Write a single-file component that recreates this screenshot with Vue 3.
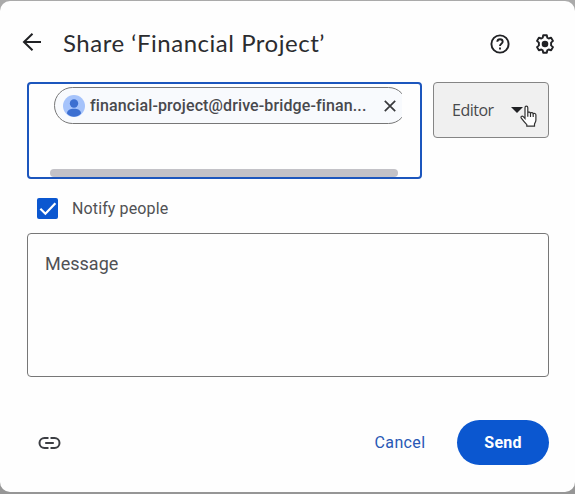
<script setup>
import { ref } from 'vue'

const email = 'financial-project@drive-bridge-finan...'
const message = ref('')
const notify = ref(true)
</script>

<template>
  <main class="page">
    <section class="dialog">
      <header class="header">
        <svg class="back" viewBox="0 0 20 20"><path d="M19 10H2M10.500 1.800 2 10l8.500 8.200" /></svg>
        <h1 class="title">Share ‘Financial Project’</h1>
        <svg class="help" viewBox="0 0 20 20">
          <circle cx="10" cy="10" r="8.600" />
          <path d="M7.300 7.800C7.400 6.100 8.500 5.300 10 5.300s2.700 1 2.700 2.500c0 1.900-2.700 2.100-2.700 4.200" />
          <path d="M10 13.600v1.800" />
        </svg>
        <svg class="gear" viewBox="0 0 20 20">
          <path d="M8.200 1.200h3.600l.5 2.500 1.400.8 2.400-.8 1.900 3.200-1.900 1.700v2.800l1.900 1.700-1.900 3.200-2.400-.8-1.400.8-.5 2.500H8.200l-.5-2.500-1.400-.8-2.400.8L2 13.100l1.900-1.700V8.600L2 6.900l1.900-3.200 2.400.8 1.400-.8z" />
          <circle cx="10" cy="10" r="3.300" />
        </svg>
      </header>

      <div class="invite">
        <div class="people">
          <div class="viewport">
            <div class="chip">
              <svg class="avatar" viewBox="0 0 22 22">
                <circle cx="11" cy="11" r="11" fill="#a5c3fb" />
                <circle cx="11" cy="8.500" r="4.200" fill="#3c6fd1" />
                <path d="M4 18.500c0-3.400 3.500-4.800 7-4.800s7 1.400 7 4.800c-4 4.400-10 4.400-14 0z" fill="#3c6fd1" />
              </svg>
              <span class="email">{{ email }}</span>
              <svg class="remove" viewBox="0 0 12 12"><path d="M.8.8l10.400 10.400M11.200.8.8 11.200" /></svg>
            </div>
          </div>
          <div class="scrollbar"></div>
        </div>
        <div class="role">
          <span class="role-name">Editor</span>
          <svg class="caret" viewBox="0 0 12 6"><path d="M0 0h12L6 6z" /></svg>
          <svg class="pointer" viewBox="0 0 18 23">
            <path d="M5 13.500V2.700c0-2.200 2.800-2.200 2.800 0v5.100c.5-1.200 2.500-1 2.700.5.500-1.100 2.500-.8 2.700.6.800-1 2.700-.5 2.700 1.100v5c0 2-1.100 2.900-1.400 4.200v2H6.800v-1.600C5 17.800 3.200 15.700 1.500 13.400.2 11.600 2 10.300 3.300 11.600z" />
            <path d="M7.800 7.500v4.200M10.500 8.500v3.400M13.200 9.300V12" />
          </svg>
        </div>
      </div>

      <label class="notify">
        <input v-model="notify" class="native" type="checkbox" />
        <span class="box">
          <svg v-if="notify" viewBox="0 0 20 20"><path d="M3.200 10.300 8 15 17.500 5" /></svg>
        </span>
        <span class="notify-text">Notify people</span>
      </label>

      <textarea v-model="message" class="message" placeholder="Message"></textarea>

      <footer class="footer">
        <svg class="link" viewBox="0 0 22 12">
          <path d="M10 1H6a5 5 0 0 0 0 10h4M12 1h4a5 5 0 0 1 0 10h-4M6.700 6h8.600" />
        </svg>
        <button class="cancel">Cancel</button>
        <button class="send">Send</button>
      </footer>
    </section>
  </main>
</template>

<style>
body { background: #a3a3a3; }
</style>

<style scoped>
* { box-sizing: border-box; }
.page { height: 494px; padding: 1px 0 2px; overflow: hidden; background: linear-gradient(#aaa, #969696); font-family: Roboto, "Liberation Sans", sans-serif; }
.dialog { height: 491px; padding: 0 26px 0 27px; border-radius: 10px; background: #fefefe; display: flex; flex-direction: column; }
svg { display: block; flex: none; }
.header { height: 81px; display: flex; align-items: center; padding: 5px 0 0; margin-left: -5px; margin-right: -6px; }
.back { width: 20px; height: 20px; margin-top: -5px; fill: none; stroke: #202124; stroke-width: 2; }
.title { margin: -3px auto 0 21px; font: 400 24px/30px Lato, sans-serif; letter-spacing: .52px; color: #2b2c2f; white-space: nowrap; }
.help, .gear { width: 20px; height: 20px; margin-top: -1px; fill: none; stroke: #202124; stroke-width: 1.900; }
.gear { margin-left: 25px; stroke-linejoin: round; }
.gear circle { fill: #202124; stroke: none; }
.invite { display: flex; gap: 11px; align-items: flex-start; }
.people { width: 395px; height: 97px; border: 2px solid #1c56bd; border-radius: 4px; padding: 3px 0 0 21px; display: flex; flex-direction: column; justify-content: space-between; }
.viewport { width: 348px; margin-left: 4px; overflow: hidden; }
.chip { width: 353px; height: 37px; border: 1px solid #777; border-radius: 19px; background: #f8fafd; display: flex; align-items: center; padding-left: 8px; }
.avatar { width: 22px; height: 22px; }
.email { width: 276px; margin-left: 5px; font-size: 16px; font-weight: 500; line-height: 22px; letter-spacing: .12px; color: #48494d; white-space: nowrap; }
.remove { width: 12px; height: 12px; margin-left: 18px; fill: none; stroke: #38393c; stroke-width: 1.700; }
.scrollbar { width: 348px; height: 8px; border-radius: 4px; background: #c3c2c7; }
.role { position: relative; width: 116px; height: 56px; border: 1px solid #858585; border-radius: 4px; background: #f0f0f0; display: flex; align-items: center; padding-left: 18px; }
.role-name { width: 59px; font: 400 16px/20px "Open Sans", sans-serif; letter-spacing: -.5px; color: #48494c; }
.caret { width: 12px; height: 6px; fill: #202124; }
.pointer { position: absolute; left: 86px; top: 22px; width: 18px; height: 23px; fill: #fff; stroke: #303030; stroke-width: 1.200; }
.notify { height: 21px; margin: 19px 0 14px 10px; display: flex; align-items: center; }
.native { position: absolute; opacity: 0; }
.box { width: 21px; height: 21px; border-radius: 2px; background: #0b57d0; }
.box svg { width: 21px; height: 21px; fill: none; stroke: #fff; stroke-width: 2.100; }
.notify-text { margin-left: 14px; font-size: 16px; line-height: 20px; letter-spacing: .12px; color: #505154; }
.message { display: block; width: 522px; height: 144px; border: 1px solid #777; border-radius: 4px; padding: 19px 17px; margin: 0; resize: none; outline: 0; background: transparent; font: 400 18px/22px Roboto, sans-serif; color: #505154; }
.message::placeholder { color: #505154; opacity: 1; }
.footer { margin-top: 43px; height: 45px; display: flex; align-items: center; padding-left: 11px; }
.link { width: 23px; height: 12px; margin-right: auto; fill: none; stroke: #3c3e43; stroke-width: 2; }
button { border: 0; padding: 0; }
.cancel { width: 52px; background: transparent; color: #2858b5; font: 400 16px/20px Roboto, sans-serif; letter-spacing: .35px; }
.send { width: 92px; height: 45px; margin-left: 31px; border-radius: 23px; background: #0b57d0; color: #fff; font: 700 16px/20px Roboto, sans-serif; letter-spacing: .2px; }
</style>
